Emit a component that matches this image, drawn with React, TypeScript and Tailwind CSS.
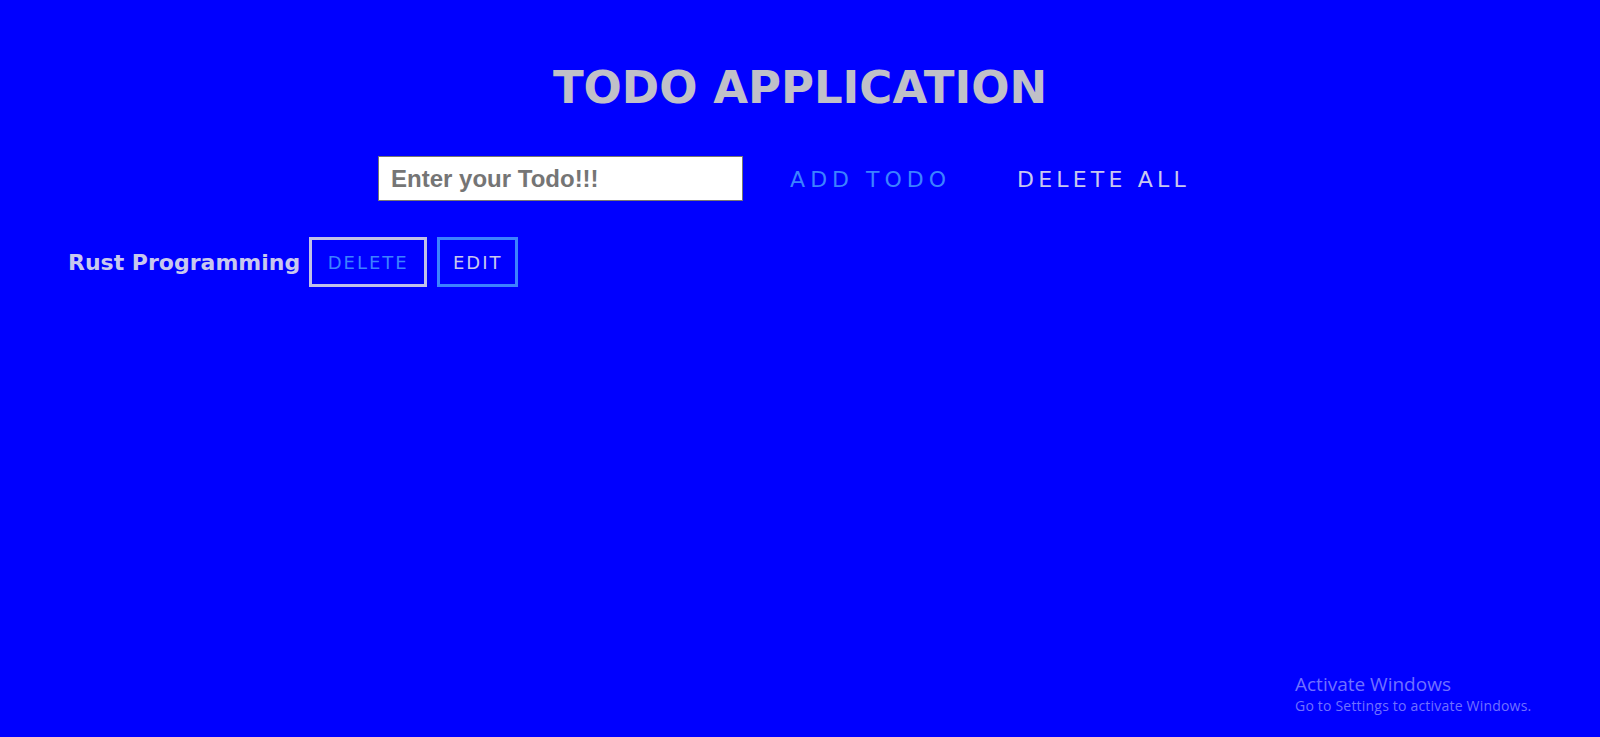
import React, { useState } from 'react';

type Todo = { id: number; text: string };

const App: React.FC = () => {
  const [todos, setTodos] = useState<Todo[]>([{ id: 1, text: 'Rust Programming' }]);
  const [value, setValue] = useState('');

  const addTodo = () => {
    if (!value.trim()) return;
    setTodos([...todos, { id: Date.now(), text: value }]);
    setValue('');
  };

  return (
    <div className="min-h-[737px] bg-[#0000ff] font-['DejaVu_Sans',sans-serif] relative">
      {/* header */}
      <h1 className="pt-[58px] text-center text-[45px] leading-[60px] font-bold text-[#c0c0c8]">
        TODO APPLICATION
      </h1>

      {/* input row */}
      <div className="mt-[38px] flex items-center justify-center pr-[32px]">
        <input
          value={value}
          onChange={e => setValue(e.target.value)}
          placeholder="Enter your Todo!!!"
          className="w-[365px] h-[45px] bg-white border border-[#767676] px-[12px] text-[24px] font-bold font-['Liberation_Sans',Arial,sans-serif] text-[#333] placeholder:text-[#757575] outline-none"
        />
        <button
          onClick={addTodo}
          className="ml-[47px] mt-[1px] text-[22px] tracking-[5px] text-[#3c82ff]"
        >
          ADD TODO
        </button>
        <button
          onClick={() => setTodos([])}
          className="ml-[66px] mt-[1px] text-[22px] tracking-[4.2px] text-[#c8c8ee]"
        >
          DELETE ALL
        </button>
      </div>

      {/* list */}
      <ul className="mt-[36px] pl-[68px] space-y-3">
        {todos.map(t => (
          <li key={t.id} className="flex items-center">
            <span className="text-[22px] font-bold text-[#c8c8ee]">{t.text}</span>
            <button
              onClick={() => setTodos(todos.filter(x => x.id !== t.id))}
              className="ml-[9px] h-[50px] w-[118px] border-[3px] border-[#c0c0e8] text-[18px] tracking-[2px] text-[#3c82ff]"
            >
              DELETE
            </button>
            <button className="ml-[10px] h-[50px] w-[81px] border-[3px] border-[#3c82ff] text-[18px] tracking-[2px] text-[#c8c8ee]">
              EDIT
            </button>
          </li>
        ))}
      </ul>

      {/* watermark */}
      <div className="absolute left-[1295px] top-[672px] text-[#7070ff] font-['Open_Sans',sans-serif]">
        <div className="text-[19px] leading-[24px]">Activate Windows</div>
        <div className="text-[14px] leading-[20px] tracking-[0.2px]">Go to Settings to activate Windows.</div>
      </div>
    </div>
  );
};

export default App;
